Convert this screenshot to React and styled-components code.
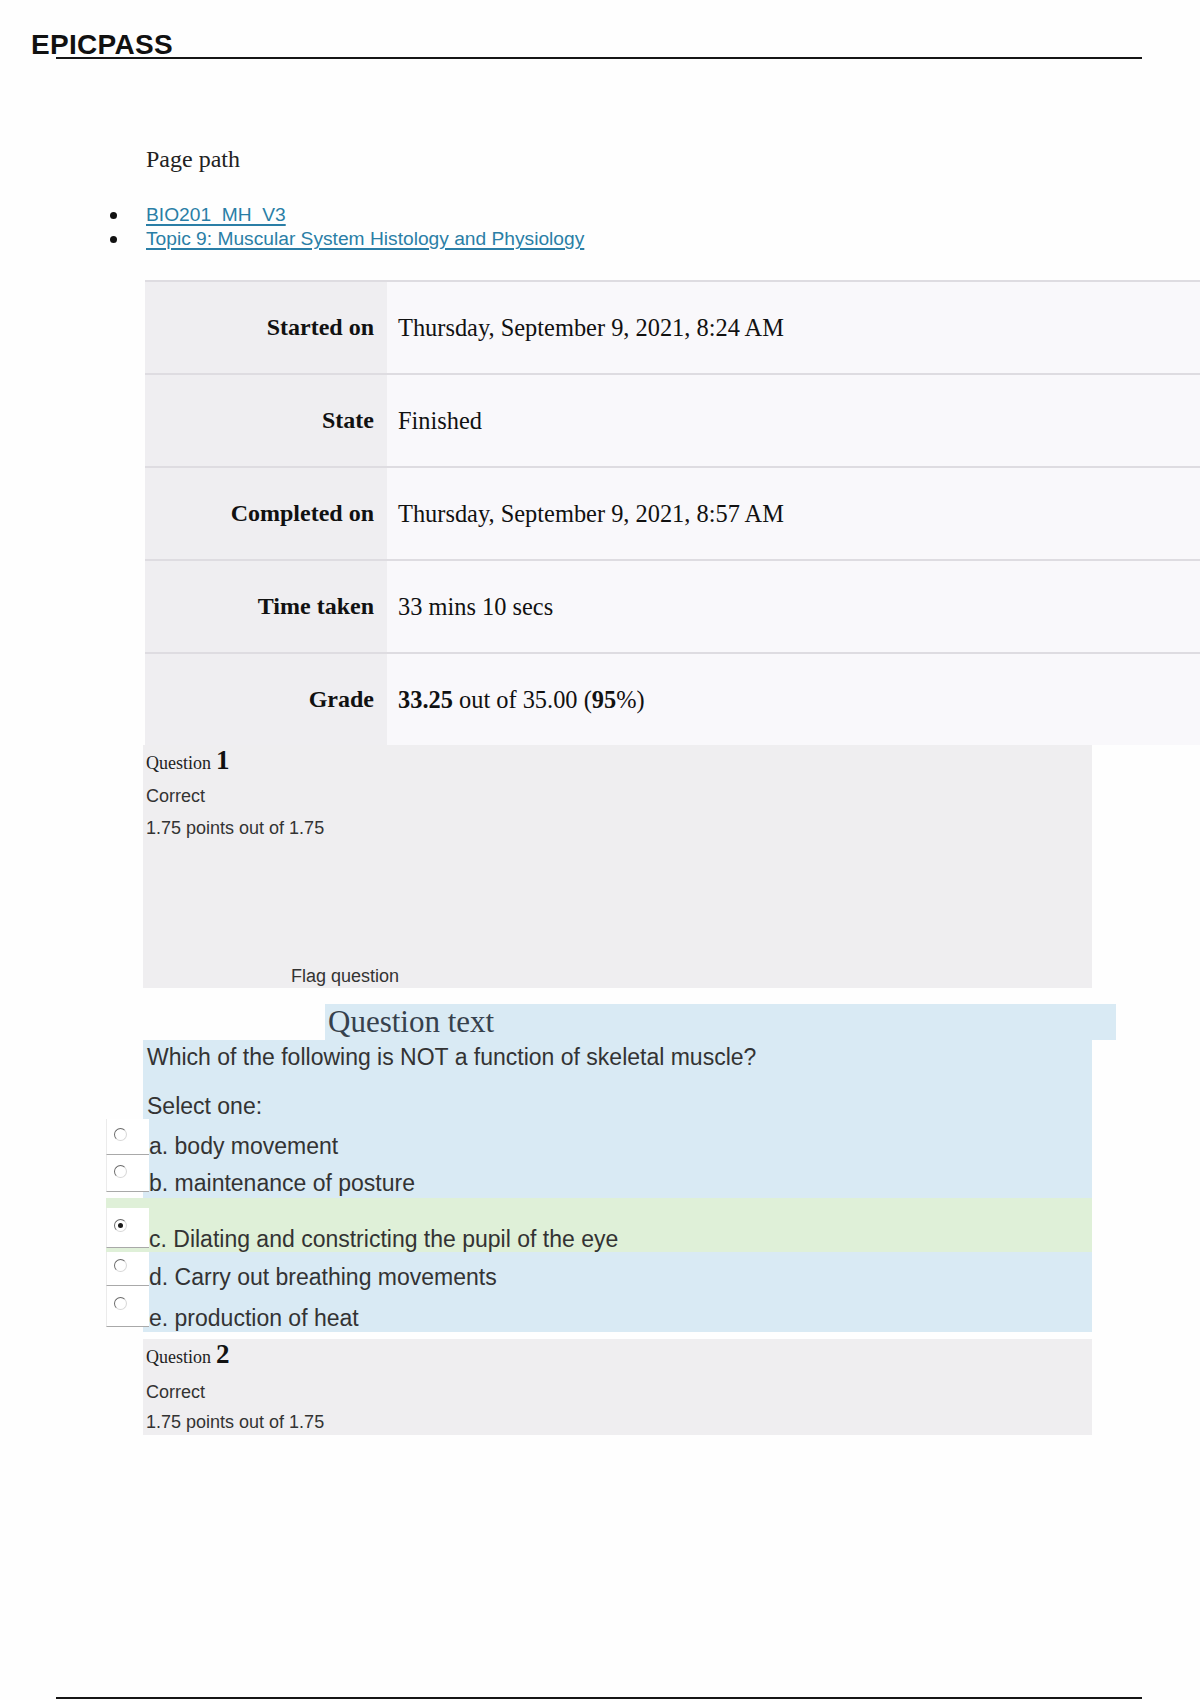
import styled, { createGlobalStyle } from "styled-components";

const GlobalStyle = createGlobalStyle`
	html, body {
		margin: 0;
		padding: 0;
		background: #fefefe;
	}
	body {
		font-family: "Liberation Sans", Arial, sans-serif;
		color: #333;
	}
	* {
		box-sizing: border-box;
	}
`;

const Page = styled.div`
	width: 1200px;
	min-height: 1700px;
	display: flex;
	flex-direction: column;
	overflow: hidden;
`;

const Header = styled.header`
	display: flex;
	margin: 0 58px 0 56px;
	padding-top: 33px;
	border-bottom: 2px solid #151515;
`;

const Logo = styled.div`
	margin-left: -25px;
	font-family: "Liberation Sans", Arial, sans-serif;
	font-weight: 700;
	font-size: 28px;
	line-height: 24px;
	color: #111;
	letter-spacing: 0.3px;
`;

const PagePath = styled.h2`
	margin: 86px 0 0 146px;
	font-family: "Liberation Serif", "Times New Roman", serif;
	font-weight: 400;
	font-size: 24px;
	line-height: 28px;
	color: #222;
`;

const Crumbs = styled.ul`
	list-style: none;
	margin: 30px 0 0 0;
	padding: 0 0 0 110px;
`;

const Crumb = styled.li`
	display: flex;
	align-items: center;
	font-size: 19.2px;
	line-height: 24px;

	&::before {
		content: "";
		width: 7px;
		height: 7px;
		border-radius: 50%;
		background: #111;
		margin-right: 29px;
	}

	a {
		color: #2a7ea6;
		text-decoration: underline;
		text-decoration-thickness: 2px;
		text-underline-offset: 3px;
	}
`;

const Summary = styled.div`
	margin: 29px 0 0 145px;
	display: grid;
	grid-template-columns: 242px 1fr;
	font-family: "Liberation Serif", "Times New Roman", serif;
	font-size: 24.4px;
	color: #111;
`;

const Cell = styled.div`
	height: 93px;
	display: flex;
	align-items: center;
	border-top: 2px solid #dedce1;
	background: ${(p) => (p.$head ? "#efeef1" : "#f9f8fb")};
	justify-content: ${(p) => (p.$head ? "flex-end" : "flex-start")};
	padding: ${(p) => (p.$head ? "0 13px 0 0" : "0 0 0 11px")};
	font-weight: ${(p) => (p.$head ? 700 : 400)};
	font-size: ${(p) => (p.$head ? "24px" : "inherit")};

	b {
		font-weight: 700;
	}
`;

const QuestionInfo = styled.section`
	margin: ${(p) => p.$top || 0}px 0 0 143px;
	width: 949px;
	background: #efeef0;
	padding: 0 3px ${(p) => p.$bottom || 0}px;
	display: flex;
	flex-direction: column;
`;

const QNo = styled.h3`
	margin: 0;
	font-family: "Liberation Serif", "Times New Roman", serif;
	font-size: 27px;
	line-height: 30px;
	font-weight: 700;
	color: #111;

	span {
		font-size: 18px;
		font-weight: 400;
		margin-right: 5px;
		color: #222;
	}
`;

const InfoLine = styled.div`
	margin-top: ${(p) => p.$gap || 9}px;
	margin-left: ${(p) => p.$indent || 0}px;
	font-size: 18px;
	line-height: 24px;
	color: #333;
`;

const QuestionTextBar = styled.div`
	margin: 16px 0 0 325px;
	width: 791px;
	height: 36px;
	background: #d9eaf4;
	padding-left: 3px;
	font-family: "Liberation Serif", "Times New Roman", serif;
	font-size: 31px;
	line-height: 36px;
	color: #36414d;
`;

const Formulation = styled.section`
	margin-left: 143px;
	width: 949px;
	background: #d9eaf4;
	padding: 4px 0 5px;
	font-size: 23px;
	color: #333;
`;

const Para = styled.p`
	margin: 0 0 ${(p) => p.$after || 0}px;
	padding-left: 4px;
	line-height: 26px;
`;

const Answers = styled.div`
	margin-left: -37px;
`;

const Picked = styled.div`
	margin-top: 6px;
	padding: 10px 0 4px;
	background: #dff0d8;
`;

const Option = styled.div`
	display: flex;
	height: ${(p) => p.$h}px;
`;

const RadioCell = styled.div`
	width: 43px;
	flex-shrink: 0;
	background: #fff;
	border-left: 1px solid #ebebeb;
	border-bottom: 1px solid #a9a9a9;
	padding: ${(p) => p.$top}px 0 0 7px;
`;

const Radio = styled.span`
	display: block;
	width: 13px;
	height: 13px;
	border-radius: 50%;
	border: 1.5px solid;
	border-color: #6a6a6a #d8d8d8 #d8d8d8 #6a6a6a;
	background: radial-gradient(circle, #fff 60%, #eee 100%);
	position: relative;

	&::after {
		content: "";
		display: ${(p) => (p.$on ? "block" : "none")};
		position: absolute;
		left: 2.5px;
		top: 2.5px;
		width: 5px;
		height: 5px;
		border-radius: 50%;
		background: #1a1a1a;
	}
`;

const OptionLabel = styled.span`
	align-self: flex-end;
	margin-bottom: -2px;
	line-height: 22px;
	color: #333;
	white-space: nowrap;
`;

const Footer = styled.footer`
	margin: auto 58px 1px 56px;
	border-top: 2px solid #151515;
`;

const summary = [
	["Started on", "Thursday, September 9, 2021, 8:24 AM"],
	["State", "Finished"],
	["Completed on", "Thursday, September 9, 2021, 8:57 AM"],
	["Time taken", "33 mins 10 secs"],
];

const options = [
	{ text: "a. body movement", h: 36, top: 9 },
	{ text: "b. maintenance of posture", h: 37, top: 10 },
	{ text: "c. Dilating and constricting the pupil of the eye", h: 40, top: 11, on: true },
	{ text: "d. Carry out breathing movements", h: 34, top: 7 },
	{ text: "e. production of heat", h: 41, top: 11 },
];

const AnswerRow = ({ o }) => (
	<Option $h={o.h}>
		<RadioCell $top={o.top}>
			<Radio $on={o.on} />
		</RadioCell>
		<OptionLabel>{o.text}</OptionLabel>
	</Option>
);

const App = () => {
	return (
		<Page>
			<GlobalStyle />
			<Header>
				<Logo>EPICPASS</Logo>
			</Header>

			<PagePath>Page path</PagePath>
			<Crumbs>
				<Crumb>
					<a href="#">BIO201_MH_V3</a>
				</Crumb>
				<Crumb>
					<a href="#">Topic 9: Muscular System Histology and Physiology</a>
				</Crumb>
			</Crumbs>

			<Summary>
				{summary.map(([k, v]) => [
					<Cell key={k} $head>
						{k}
					</Cell>,
					<Cell key={k + "v"}>{v}</Cell>,
				])}
				<Cell $head>Grade</Cell>
				<Cell>
					<b>33.25</b>&nbsp;out of 35.00 (<b>95</b>%)
				</Cell>
			</Summary>

			<QuestionInfo>
				<QNo>
					<span>Question</span>1
				</QNo>
				<InfoLine $gap={6}>Correct</InfoLine>
				<InfoLine $gap={8}>1.75 points out of 1.75</InfoLine>
				<InfoLine $gap={124} $indent={145}>
					Flag question
				</InfoLine>
			</QuestionInfo>

			<QuestionTextBar>Question text</QuestionTextBar>
			<Formulation>
				<Para $after={23}>Which of the following is NOT a function of skeletal muscle?</Para>
				<Para>Select one:</Para>
				<Answers>
					<AnswerRow o={options[0]} />
					<AnswerRow o={options[1]} />
					<Picked>
						<AnswerRow o={options[2]} />
					</Picked>
					<AnswerRow o={options[3]} />
					<AnswerRow o={options[4]} />
				</Answers>
			</Formulation>

			<QuestionInfo $top={7} $bottom={1}>
				<QNo>
					<span>Question</span>2
				</QNo>
				<InfoLine $gap={8}>Correct</InfoLine>
				<InfoLine $gap={6}>1.75 points out of 1.75</InfoLine>
			</QuestionInfo>

			<Footer />
		</Page>
	);
};

export default App;
